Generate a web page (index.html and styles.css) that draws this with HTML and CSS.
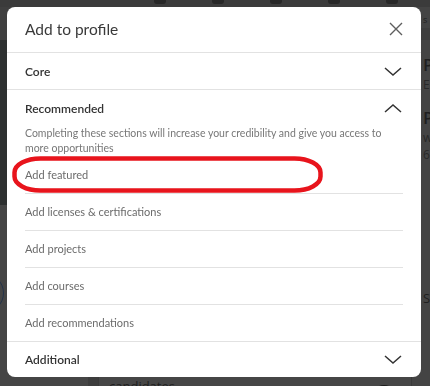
FILE: index.html
```html
<!DOCTYPE html>
<html>
  <head>
    <link rel="stylesheet" href="styles.css">
  </head>
  <body>
  <div class='page'>
    <header class='topbar'>
      <span class='nav-icon'></span>
      <span class='nav-icon'></span>
      <span class='nav-icon'></span>
      <span class='nav-icon'></span>
      <span class='nav-icon'></span>
    </header>
    <div class='feed'>
      <aside class='side'>
        <div class='side-top'></div>
        <div class='side-card'></div>
        <div class='side-rest'><span class='ring'></span></div>
      </aside>
      <section class='main'>
        <div class='main-body'></div>
        <div class='main-card'>
          <p class='cut'>candidates.</p>
          <span class='edit-dot'></span>
        </div>
      </section>
      <aside class='right'>
        <p class='tiny'>s</p>
        <div class='strip'></div>
        <p class='big'>P</p>
        <p class='small'>E</p>
        <p class='big'>P</p>
        <p class='small'>w</p>
        <p class='small'>6</p>
        <p class='tall'>S</p>
      </aside>
    </div>
  </div>

  <div class='modal'>
    <header class='modal-head'>
      <h2 class='modal-title'>Add to profile</h2>
      <svg class='close' width='14' height='14' viewBox='0 0 14 14'>
        <path d='M1 1 L13 13 M13 1 L1 13' stroke='#5e5e5e' stroke-width='1.4' fill='none'/>
      </svg>
    </header>

    <div class='group'>
      <h3 class='group-title'>Core</h3>
      <svg class='chev' width='18' height='9' viewBox='0 0 18 9'>
        <path d='M1 1 L9 8 L17 1' stroke='#333' stroke-width='1.5' fill='none'/>
      </svg>
    </div>

    <div class='group open'>
      <div class='group-row'>
        <h3 class='group-title'>Recommended</h3>
        <svg class='chev' width='18' height='9' viewBox='0 0 18 9'>
          <path d='M1 8 L9 1 L17 8' stroke='#333' stroke-width='1.5' fill='none'/>
        </svg>
      </div>
      <p class='desc'>Completing these sections will increase your credibility and give you access to more opportunities</p>
      <ul class='items'>
        <li>Add featured</li>
        <li>Add licenses &amp; certifications</li>
        <li>Add projects</li>
        <li>Add courses</li>
        <li>Add recommendations</li>
      </ul>
    </div>

    <div class='group last'>
      <h3 class='group-title'>Additional</h3>
      <svg class='chev' width='18' height='9' viewBox='0 0 18 9'>
        <path d='M1 1 L9 8 L17 1' stroke='#333' stroke-width='1.5' fill='none'/>
      </svg>
    </div>

    <svg class='mark' width='312' height='38' viewBox='0 0 312 38'>
      <rect x='2.5' y='2.5' width='306' height='32' rx='26' ry='14' stroke='#e8141c' stroke-width='4.5' fill='none'/>
    </svg>
  </div>
  </body>
</html>
```

FILE: styles.css
```css
* {
  box-sizing: border-box;
}
body {
  margin: 0;
  font-family: "Lato", "Open Sans", sans-serif;
  background-color: #434343;
  overflow: hidden;
  height: 386px;
}
p, h2, h3, ul {
  margin: 0;
  padding: 0;
}

/* dimmed page behind the dialog */
.page {
  height: 386px;
  overflow: hidden;
}
.topbar {
  height: 7px;
  background-color: #3b3b3b;
  display: flex;
  gap: 46px;
  padding-left: 154px;
}
.nav-icon {
  width: 12px;
  height: 4px;
  background-color: #272727;
  border-radius: 0 0 3px 3px;
}
.feed {
  display: flex;
  height: 379px;
}
.side {
  width: 88px;
  display: flex;
  flex-direction: column;
}
.side-top {
  height: 33px;
  background-color: #3f3f3f;
}
.side-card {
  height: 165px;
  background-color: #2d3030;
}
.side-rest {
  flex: 1;
  background-color: #454545;
  padding: 68px 0 0 0;
}
.ring {
  display: block;
  width: 40px;
  height: 40px;
  margin-left: -36px;
  border: 1px solid #23334a;
  border-radius: 50%;
}
.main {
  flex: 1;
  display: flex;
  flex-direction: column;
  padding-left: 10px;
  background-color: #3d3d3d;
}
.main-body {
  flex: 1;
}
.main-card {
  height: 40px;
  margin-bottom: -12px;
  background-color: #464646;
  border: 1px solid #3a3a3a;
  display: flex;
  justify-content: space-between;
  padding: 0 15px 0 10px;
}
.cut {
  font-family: "Open Sans", sans-serif;
  font-size: 13px;
  line-height: 16px;
  color: #1e1e1e;
  padding-top: 19px;
}
.edit-dot {
  width: 24px;
  height: 24px;
  border-radius: 50%;
  background-color: #1c1c1c;
  margin-top: 26px;
}
.right {
  width: 18px;
  background-color: #444;
  color: #1f1f1f;
  font-family: "Open Sans", sans-serif;
  padding-left: 11px;
  overflow: hidden;
}
.tiny {
  font-size: 9px;
  height: 21px;
  padding-top: 6px;
  color: #222;
}
.strip {
  height: 12px;
  margin-left: -11px;
  background-color: #3e3e3e;
}
.big {
  font-size: 17px;
  font-weight: 600;
  line-height: 22px;
  margin-top: 14px;
}
.small {
  font-size: 12px;
  line-height: 17px;
  color: #282828;
}
.tall {
  font-size: 13px;
  margin-top: 126px;
}

/* dialog */
.modal {
  position: fixed;
  top: 7px;
  left: 7px;
  width: 414px;
  height: 370px;
  background-color: #fff;
  border-radius: 8px;
  overflow: hidden;
  color: #333;
}
.modal-head {
  height: 46px;
  border-bottom: 1px solid #e2e2e2;
  display: flex;
  align-items: center;
  justify-content: space-between;
  padding: 0 18px 2px 18px;
}
.modal-title {
  font-size: 15.5px;
  font-weight: 400;
  color: #3a3a3a;
}
.group {
  border-bottom: 1px solid #e2e2e2;
  display: flex;
  align-items: center;
  justify-content: space-between;
  height: 37px;
  padding: 0 18px;
}
.group.open {
  display: block;
  height: auto;
}
.group.last {
  border-bottom: none;
  height: 35px;
}
.group-row {
  display: flex;
  align-items: center;
  justify-content: space-between;
  height: 36px;
}
.group-title {
  font-size: 12px;
  font-weight: 600;
  color: #333;
}
.chev {
  margin-right: 1px;
}
.desc {
  font-size: 10.5px;
  line-height: 15px;
  color: #777;
  padding-right: 10px;
  padding-bottom: 1px;
}
.items {
  list-style: none;
}
.items li {
  height: 37px;
  line-height: 36px;
  font-size: 11px;
  color: #6b6b6b;
  border-bottom: 1px solid #e2e2e2;
}
.items li:last-child {
  border-bottom: none;
  height: 36px;
}
.mark {
  position: absolute;
  left: 5px;
  top: 149px;
}
```
